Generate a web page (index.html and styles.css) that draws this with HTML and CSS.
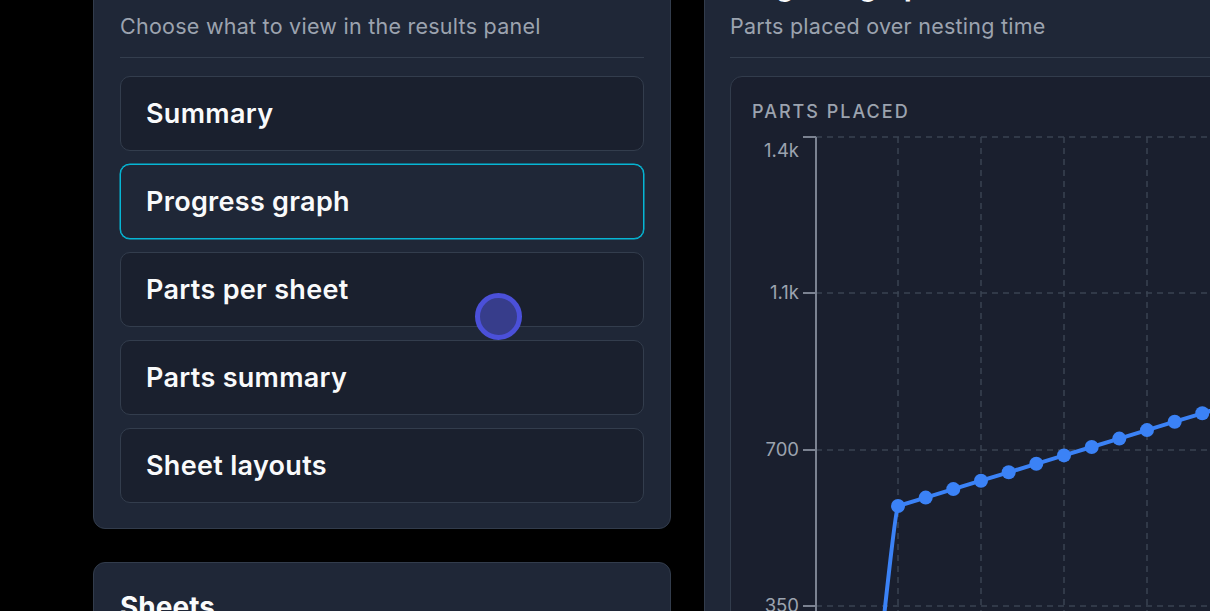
FILE: index.html
```html
<!DOCTYPE html>
<html lang="en">

<head>
    <meta charset="UTF-8">
    <meta name="viewport" content="width=device-width, initial-scale=1.0">
    <title>Nesting results</title>
    <link rel="stylesheet" href="styles.css">
</head>

<body>
    <main class="workspace">
        <aside class="sidebar">
            <section class="panel">
                <h2 class="panel_title">Results view</h2>
                <p class="panel_subtitle">Choose what to view in the results panel</p>
                <hr class="panel_divider">
                <div class="view_list">
                    <button class="view_option">Summary</button>
                    <button class="view_option view_option_active">Progress graph</button>
                    <button class="view_option">Parts per sheet</button>
                    <button class="view_option">Parts summary</button>
                    <button class="view_option">Sheet layouts</button>
                </div>
            </section>
            <section class="panel">
                <h2 class="panel_title">Sheets</h2>
                <p class="panel_subtitle">Sheets used in this nest</p>
            </section>
        </aside>

        <section class="panel panel_chart">
            <h2 class="panel_title">Progress graph</h2>
            <p class="panel_subtitle">Parts placed over nesting time</p>
            <hr class="panel_divider">
            <div class="chart_card">
                <div class="chart_label">Parts placed</div>
                <svg class="chart" width="600" height="500" viewBox="0 0 600 500">
                    <!-- grid -->
                    <g class="chart_grid">
                        <line x1="64" y1="10" x2="600" y2="10" />
                        <line x1="64" y1="166" x2="600" y2="166" />
                        <line x1="64" y1="323" x2="600" y2="323" />
                        <line x1="64" y1="479" x2="600" y2="479" />
                        <line x1="146" y1="10" x2="146" y2="500" />
                        <line x1="229" y1="10" x2="229" y2="500" />
                        <line x1="312" y1="10" x2="312" y2="500" />
                        <line x1="395" y1="10" x2="395" y2="500" />
                        <line x1="478" y1="10" x2="478" y2="500" />
                    </g>
                    <!-- y axis -->
                    <g class="chart_axis">
                        <line x1="64" y1="10" x2="64" y2="500" />
                        <line x1="51" y1="10" x2="64" y2="10" />
                        <line x1="51" y1="166" x2="64" y2="166" />
                        <line x1="51" y1="323" x2="64" y2="323" />
                        <line x1="51" y1="479" x2="64" y2="479" />
                    </g>
                    <g class="chart_ticks">
                        <text x="47" y="30">1.4k</text>
                        <text x="47" y="172">1.1k</text>
                        <text x="47" y="329">700</text>
                        <text x="47" y="485">350</text>
                    </g>
                    <!-- series -->
                    <path class="chart_line" d="M116,635 C131,505 142,386 146,379 L173.7,370.6 L201.3,362.1 L229,353.7 L256.7,345.3 L284.3,336.8 L312,328.4 L339.7,320 L367.3,311.6 L395,303.1 L422.7,294.7 L450.3,286.3 L478,277.8 L505.7,269.4" />
                    <g class="chart_dots">
                        <circle cx="146" cy="379" r="7" />
                        <circle cx="173.7" cy="370.6" r="7" />
                        <circle cx="201.3" cy="362.1" r="7" />
                        <circle cx="229" cy="353.7" r="7" />
                        <circle cx="256.7" cy="345.3" r="7" />
                        <circle cx="284.3" cy="336.8" r="7" />
                        <circle cx="312" cy="328.4" r="7" />
                        <circle cx="339.7" cy="320" r="7" />
                        <circle cx="367.3" cy="311.6" r="7" />
                        <circle cx="395" cy="303.1" r="7" />
                        <circle cx="422.7" cy="294.7" r="7" />
                        <circle cx="450.3" cy="286.3" r="7" />
                        <circle cx="478" cy="277.8" r="7" />
                    </g>
                </svg>
            </div>
        </section>
    </main>

    <div class="cursor_dot"></div>
</body>

</html>
```

FILE: styles.css
```css
body {
    margin: 0;
    background-color: #000000;
    font-family: "Inter", "Noto Sans", sans-serif;
    overflow: hidden;
}

.workspace {
    display: grid;
    grid-template-columns: 578px 640px;
    column-gap: 33px;
    align-items: start;
    padding-left: 93px;
    margin-top: -59px;
}

.sidebar {
    display: flex;
    flex-direction: column;
    gap: 33px;
}

.panel {
    background-color: #1f2737;
    border: 1px solid #323c4c;
    border-radius: 12px;
    padding: 26px 26px 25px 26px;
}

.panel_chart {
    padding-left: 25px;
    height: 900px;
}

.panel_title {
    margin: 0 0 8px 0;
    font-size: 28px;
    line-height: 36px;
    font-weight: 700;
    color: #f9fafb;
}

.panel_subtitle {
    margin: 0;
    font-size: 21.5px;
    line-height: 28px;
    letter-spacing: 0.25px;
    color: #9ca3af;
}

.panel_divider {
    margin: 17px 0 18px 0;
    border: none;
    border-top: 1px solid #343e4e;
}

.view_list {
    display: flex;
    flex-direction: column;
    gap: 13px;
}

.view_option {
    display: block;
    width: 100%;
    height: 75px;
    padding: 0 25px;
    background-color: #1a202e;
    border: 1px solid #333d4d;
    border-radius: 10px;
    color: #f9fafb;
    font-family: inherit;
    font-size: 27px;
    font-weight: 600;
    letter-spacing: 0.3px;
    text-align: left;
}

.view_option_active {
    background-color: #1f2737;
    border-color: #06b6d4;
    box-shadow: 0 0 0 0.5px #06b6d4;
}

.chart_card {
    background-color: #1a1f2e;
    border: 1px solid #323c4c;
    border-radius: 12px;
    padding: 23px 21px 22px 21px;
    height: 700px;
}

.chart_label {
    font-size: 18px;
    line-height: 24px;
    font-weight: 500;
    letter-spacing: 2px;
    text-transform: uppercase;
    color: #9ca3af;
}

.chart {
    display: block;
    margin-top: 3px;
}

.chart_grid line {
    stroke: #3a4352;
    stroke-width: 1.5;
    stroke-dasharray: 6 5;
}

.chart_axis line {
    stroke: #7b8291;
    stroke-width: 2;
}

.chart_ticks text {
    font-family: "Inter", sans-serif;
    font-size: 18.5px;
    fill: #9ca3af;
    text-anchor: end;
}

.chart_line {
    fill: none;
    stroke: #3b82f6;
    stroke-width: 4;
}

.chart_dots circle {
    fill: #3b82f6;
}

/* pointer highlight over the list */
.cursor_dot {
    position: absolute;
    left: 475px;
    top: 293px;
    width: 47px;
    height: 47px;
    box-sizing: border-box;
    border: 5px solid #4b50d9;
    border-radius: 50%;
    background-color: #373d8b;
}
```
